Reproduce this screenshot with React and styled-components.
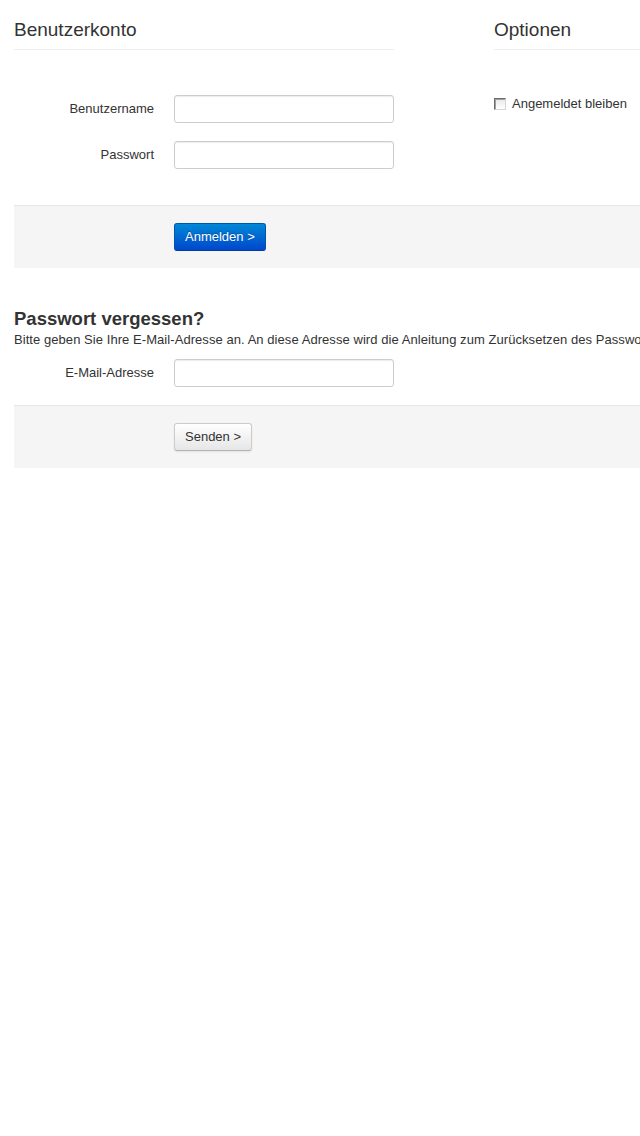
import React from "react";
import styled, { createGlobalStyle } from "styled-components";

const Global = createGlobalStyle`
  html, body { margin: 0; padding: 0; background: #fff; overflow: hidden; }
  body {
    font-family: "Liberation Sans", Arial, sans-serif;
    font-size: 13px;
    color: #333;
  }
`;

const Page = styled.div`
  width: 940px;
  padding: 9px 0 0 14px;
`;

const Form = styled.form`
  margin: 0;
`;

const Columns = styled.div`
  display: grid;
  grid-template-columns: 380px 480px;
  column-gap: 100px;
`;

const Fieldset = styled.fieldset`
  border: 0;
  margin: 0;
  padding: 0;
  min-width: 0;
`;

const Legend = styled.div`
  font-size: 19px;
  line-height: 42px;
  height: 40px;
  color: #333;
  border-bottom: 1px solid #eee;
  margin-bottom: 45px;
`;

const ControlGroup = styled.div`
  display: flex;
  align-items: center;
  margin-bottom: ${(p) => (p.$last ? "0" : "18px")};
`;

const ControlLabel = styled.label`
  width: 140px;
  padding-right: 20px;
  text-align: right;
  line-height: 28px;
  font-size: 13px;
  color: #333;
`;

const Input = styled.input`
  box-sizing: border-box;
  width: 220px;
  height: 28px;
  margin: 0;
  padding: 4px 6px;
  border: 1px solid #ccc;
  border-radius: 3px;
  background: #fff;
  box-shadow: inset 0 1px 1px rgba(0, 0, 0, 0.075);
  font-family: inherit;
  font-size: 13px;
  outline: none;
`;

const CheckRow = styled.label`
  display: flex;
  align-items: center;
  gap: 6px;
  line-height: 18px;
  font-size: 13px;
  color: #333;
`;

const CheckBox = styled.span`
  box-sizing: border-box;
  width: 12px;
  height: 12px;
  border: 1px solid #6d6d6d;
  border-right-color: #d6d6d6;
  border-bottom-color: #d6d6d6;
  background: linear-gradient(#e8e8e8, #fff);
  box-shadow: inset 1px 1px 0 #a0a0a0;
`;

const Actions = styled.div`
  margin-top: ${(p) => p.$top};
  border-top: 1px solid #e5e5e5;
  background: #f5f5f5;
  padding: 17px 0 17px 160px;
  width: 960px;
`;

const Button = styled.button`
  box-sizing: border-box;
  height: 28px;
  padding: 0 10px;
  border-radius: 3px;
  font-family: inherit;
  font-size: 13px;
  line-height: 26px;
  cursor: pointer;
  ${(p) =>
    p.$primary
      ? `
    color: #fff;
    border: 1px solid #0055b3;
    border-bottom-color: #003d99;
    background: linear-gradient(#0088d6, #0047cc);
    text-shadow: 0 -1px 0 rgba(0,0,0,0.25);
  `
      : `
    color: #333;
    border: 1px solid #ccc;
    border-bottom-color: #b3b3b3;
    background: linear-gradient(#ffffff, #e6e6e6);
    box-shadow: 0 1px 2px rgba(0,0,0,0.08);
  `}
`;

const SubHeading = styled.h2`
  margin: 40px 0 0;
  font-size: 18.5px;
  line-height: 22px;
  font-weight: bold;
  color: #333;
`;

const Description = styled.p`
  margin: 1px 0 10px;
  line-height: 18px;
  font-size: 13px;
  letter-spacing: 0.06px;
  white-space: nowrap;
`;

export default function App() {
  return (
    <>
      <Global />
      <Page>
        <Form>
          <Columns>
            <Fieldset>
              <Legend>Benutzerkonto</Legend>
              <ControlGroup>
                <ControlLabel>Benutzername</ControlLabel>
                <Input type="text" />
              </ControlGroup>
              <ControlGroup $last>
                <ControlLabel>Passwort</ControlLabel>
                <Input type="password" />
              </ControlGroup>
            </Fieldset>
            <Fieldset>
              <Legend>Optionen</Legend>
              <CheckRow>
                <CheckBox />
                Angemeldet bleiben
              </CheckRow>
            </Fieldset>
          </Columns>
          <Actions $top="36px">
            <Button type="button" $primary>
              Anmelden &gt;
            </Button>
          </Actions>
        </Form>
        <Form>
          <SubHeading>Passwort vergessen?</SubHeading>
          <Description>
            Bitte geben Sie Ihre E-Mail-Adresse an. An diese Adresse wird die Anleitung zum Zurücksetzen des Passworts gesendet.
          </Description>
          <ControlGroup $last>
            <ControlLabel>E-Mail-Adresse</ControlLabel>
            <Input type="email" />
          </ControlGroup>
          <Actions $top="18px">
            <Button type="button">Senden &gt;</Button>
          </Actions>
        </Form>
      </Page>
    </>
  );
}
